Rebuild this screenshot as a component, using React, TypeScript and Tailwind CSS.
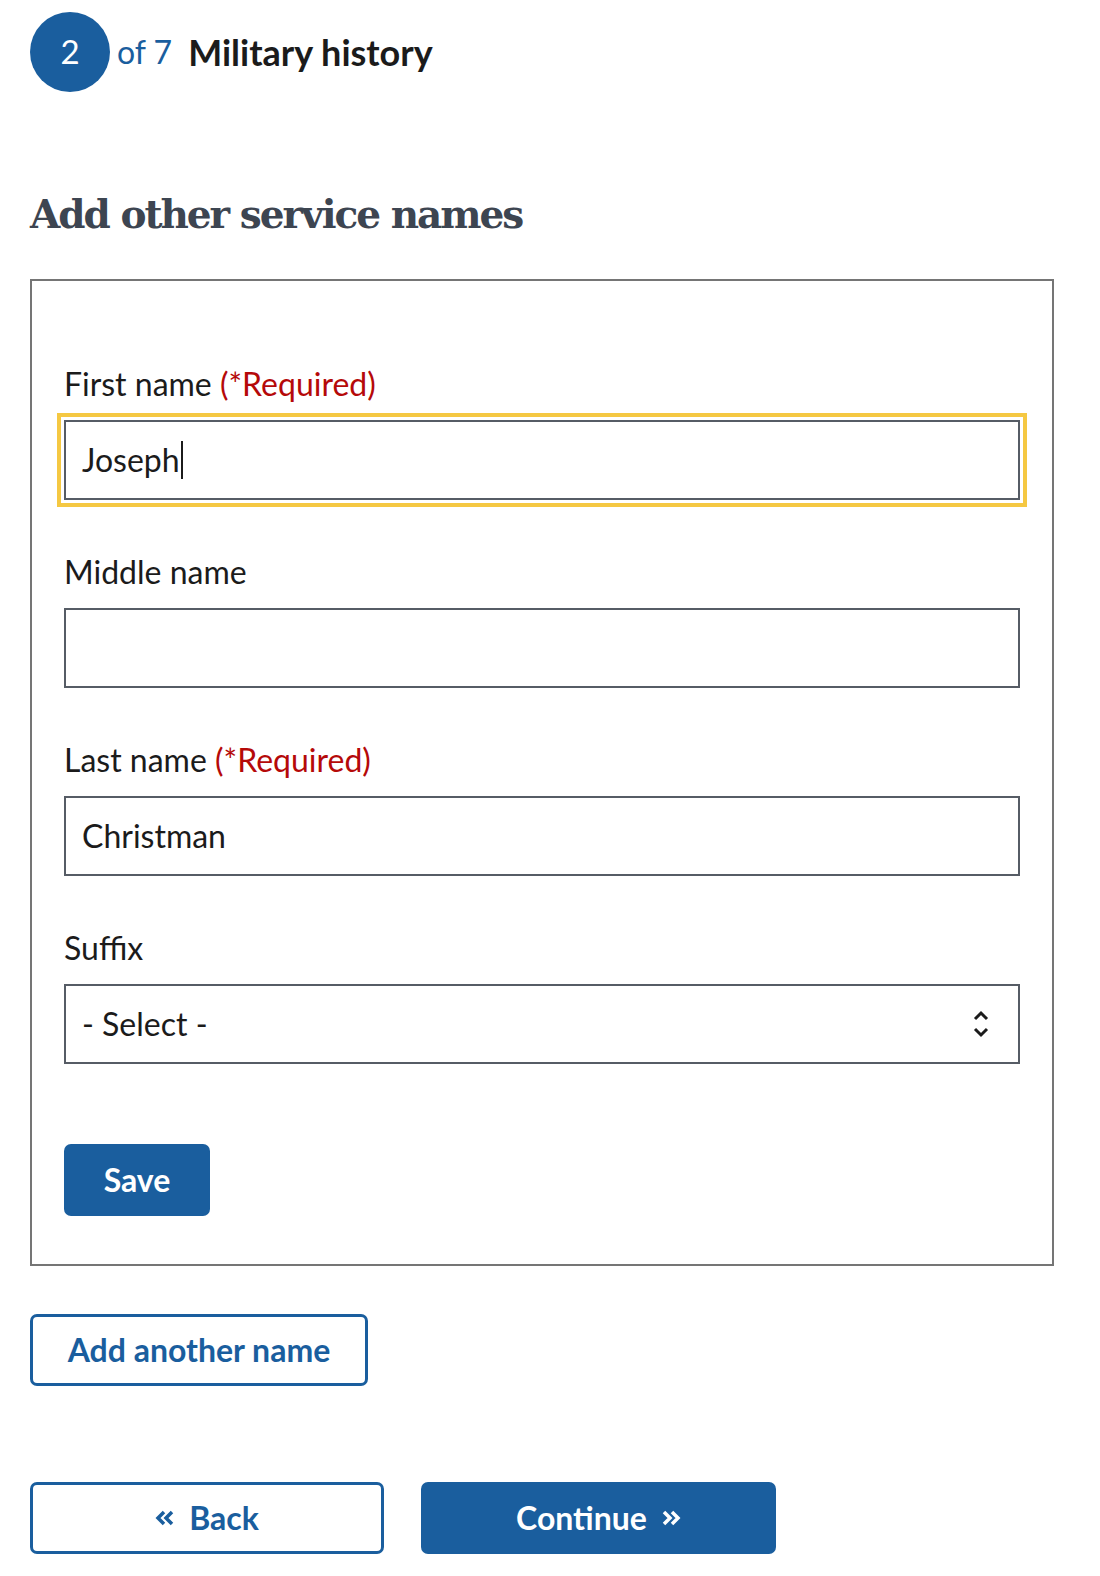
import React from "react";

const font = "font-['Lato','Noto_Sans',sans-serif]";

interface FieldProps {
  label: string;
  required?: boolean;
  children: React.ReactNode;
  first?: boolean;
}

const Field = ({ label, required, children, first }: FieldProps) => {
  return (
    <div className={first ? "" : "mt-[52px]"}>
      <label className="block text-[32px] leading-[40px] text-[#1b1b1b] mb-[16px]">
        {label}
        {required && <span className="text-[#b50909]"> (*Required)</span>}
      </label>
      {children}
    </div>
  );
};

const inputBox =
  "flex items-center w-full h-[80px] border-2 border-[#565c65] bg-white px-[16px] text-[32px] text-[#1b1b1b]";

const Chevrons = ({ dir, color }: { dir: "left" | "right"; color: string }) => (
  <svg width="20" height="18" viewBox="0 0 20 18" fill="none" stroke={color} strokeWidth="3.5">
    {dir === "left" ? (
      <>
        <path d="M9 3 L3 9 L9 15" />
        <path d="M17 3 L11 9 L17 15" />
      </>
    ) : (
      <>
        <path d="M3 3 L9 9 L3 15" />
        <path d="M11 3 L17 9 L11 15" />
      </>
    )}
  </svg>
);

const App = () => {
  return (
    <div className={`${font} min-h-[1576px] bg-white px-[30px] pt-[12px]`}>
      {/* step indicator */}
      <div className="flex items-center">
        <div className="flex h-[80px] w-[80px] items-center justify-center rounded-full bg-[#1a5e9e] text-[33px] text-white">
          2
        </div>
        <span className="ml-[7px] text-[32px] text-[#1a5e9e]">of 7</span>
        <span className="ml-[16px] text-[36px] font-bold text-[#1b1b1b]">
          Military history
        </span>
      </div>

      <h2 className="mt-[97px] font-['DejaVu_Serif',serif] text-[39px] font-bold leading-[50px] tracking-[-2px] text-[#3d4551]">
        Add other service names
      </h2>

      <div className="mt-[40px] w-[1024px] border-2 border-[#757575] px-[32px] pt-[83px] pb-[48px]">
        <Field label="First name" required first>
          <div className="outline-4 outline-offset-[3px] outline-[#f5c842]">
            <div className={inputBox}>
              <span>Joseph</span>
              <span className="ml-[1px] h-[38px] w-[2px] bg-[#1b1b1b]" />
            </div>
          </div>
        </Field>

        <Field label="Middle name">
          <div className={inputBox} />
        </Field>

        <Field label="Last name" required>
          <div className={inputBox}>Christman</div>
        </Field>

        <Field label="Suffix">
          <div className={`${inputBox} justify-between`}>
            <span>- Select -</span>
            <svg
              width="18"
              height="32"
              viewBox="0 0 18 32"
              fill="none"
              stroke="#1b1b1b"
              strokeWidth="3"
              className="mr-[12px]"
            >
              <path d="M3 11 L9 5 L15 11" />
              <path d="M3 21 L9 27 L15 21" />
            </svg>
          </div>
        </Field>

        <button className="mt-[80px] flex h-[72px] w-[146px] items-center justify-center rounded-[7px] bg-[#1a5e9e] text-[32px] font-bold text-white">
          Save
        </button>
      </div>

      <button className="mt-[48px] flex h-[72px] w-[338px] items-center justify-center rounded-[7px] border-[3px] border-[#1a5e9e] bg-white text-[32px] font-bold text-[#1a5e9e]">
        Add another name
      </button>

      <div className="mt-[96px] flex gap-[37px]">
        <button className="flex h-[72px] w-[354px] items-center justify-center gap-[14px] rounded-[7px] border-[3px] border-[#1a5e9e] bg-white text-[32px] font-bold text-[#1a5e9e]">
          <Chevrons dir="left" color="#1a5e9e" />
          Back
        </button>
        <button className="flex h-[72px] w-[355px] items-center justify-center gap-[14px] rounded-[7px] bg-[#1a5e9e] text-[32px] font-bold text-white">
          Continue
          <Chevrons dir="right" color="#ffffff" />
        </button>
      </div>
    </div>
  );
};

export default App;
